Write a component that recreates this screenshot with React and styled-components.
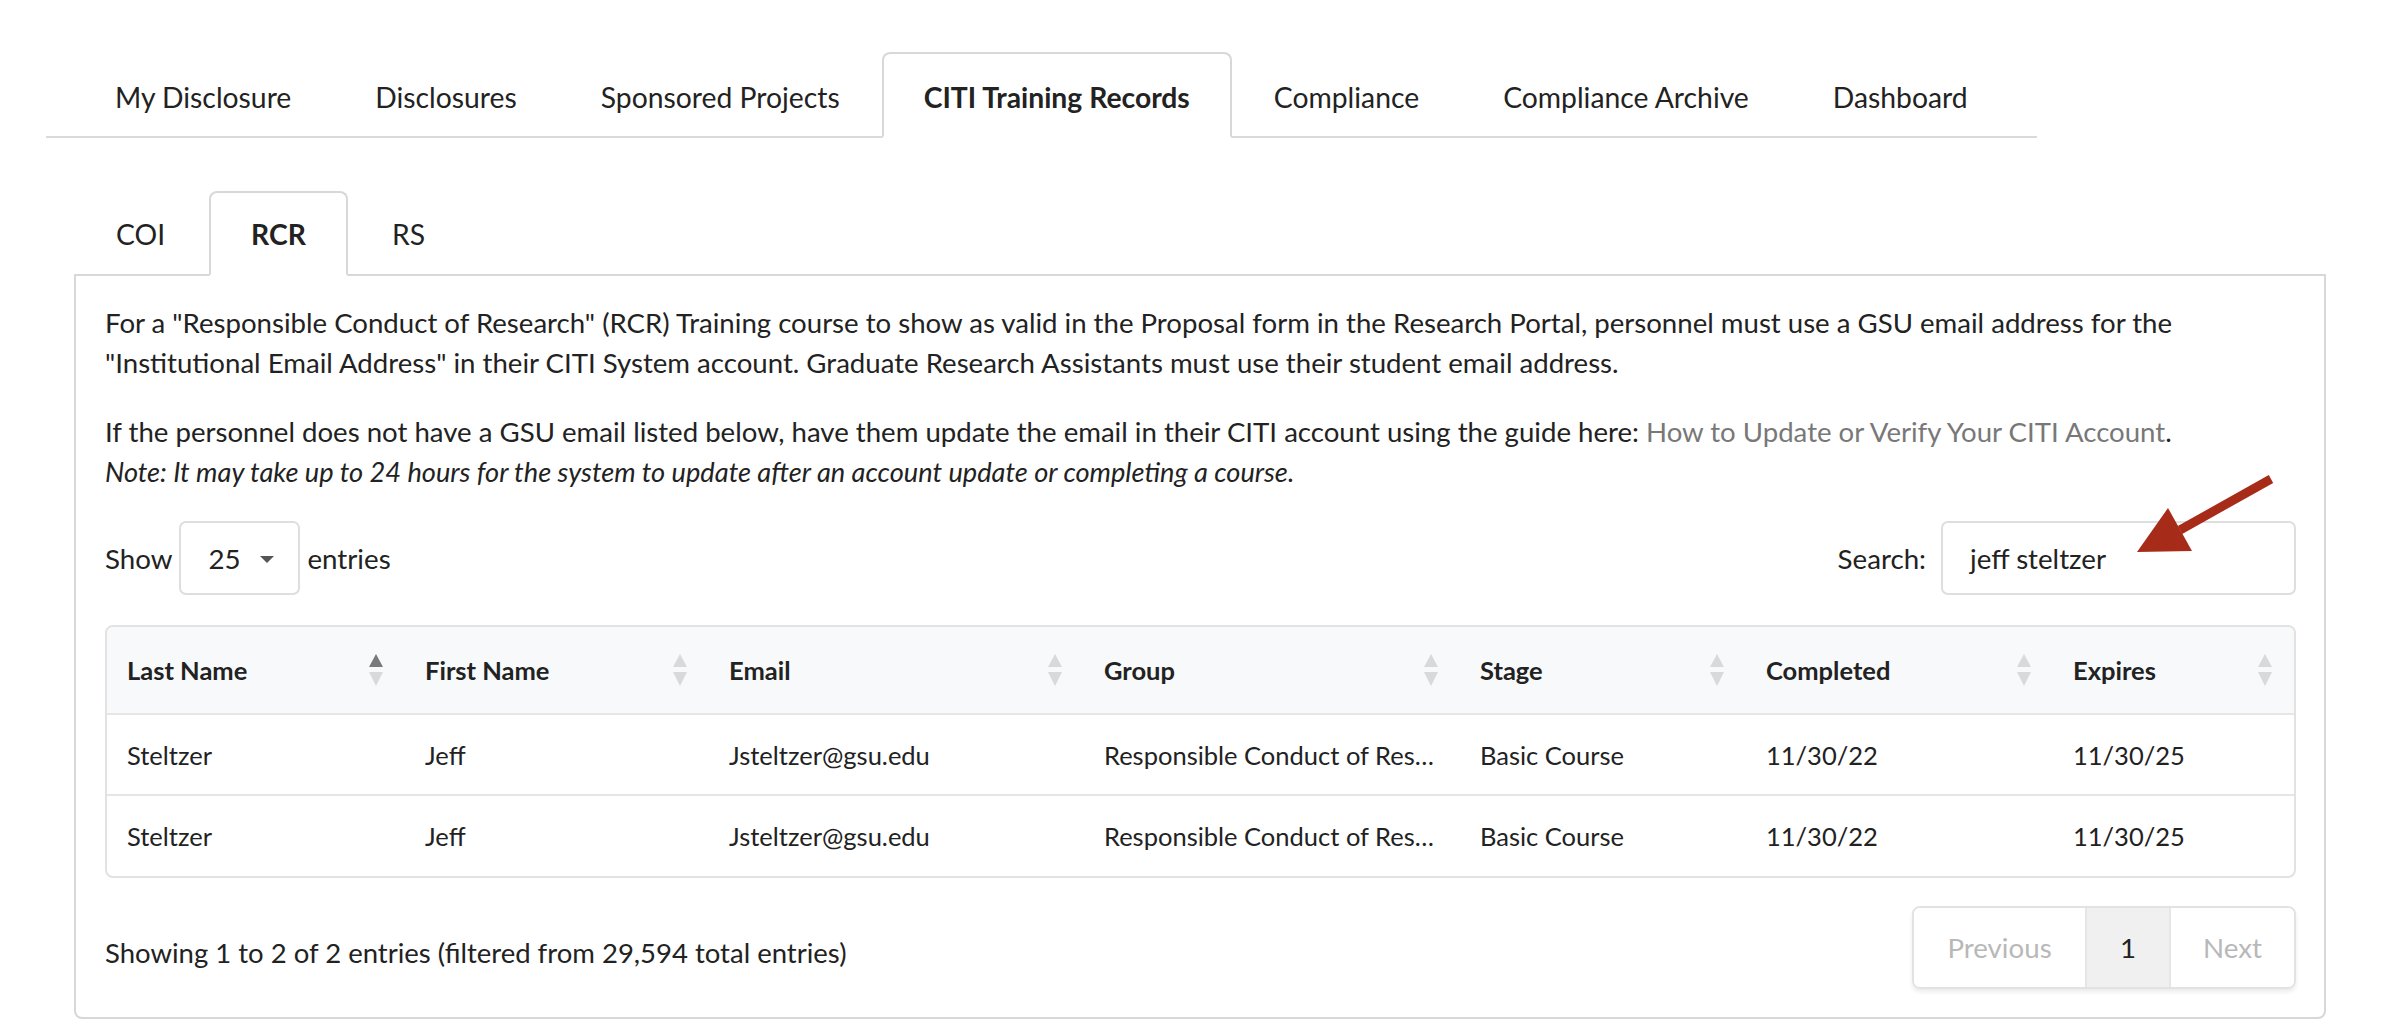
import React from 'react'
import styled, { createGlobalStyle } from 'styled-components'

const GlobalStyle = createGlobalStyle`
  html, body { margin: 0; padding: 0; background: #fff; }
  body { font-family: Lato, 'Open Sans', sans-serif; color: #222; }
  * { box-sizing: border-box; }
`

const Page = styled.div`
  position: relative;
  width: 2404px;
  height: 1036px;
  padding-top: 52px;
  overflow: hidden;
`

const MainNav = styled.nav`
  display: flex;
  margin-left: 46px;
  width: 1991px;
  padding-left: 27px;
  border-bottom: 2px solid #dadada;
`

const Tab = styled.a`
  display: block;
  margin-bottom: -2px;
  padding: ${p => (p.$small ? '21px 40px 20px' : '23px 40px 19px')};
  border: 2px solid ${p => (p.$active ? '#d8d8d8' : 'transparent')};
  border-bottom-color: ${p => (p.$active ? '#fff' : 'transparent')};
  border-radius: 8px 8px 0 0;
  background: ${p => (p.$active ? '#fff' : 'transparent')};
  font-size: 28.3px;
  line-height: 40px;
  font-weight: ${p => (p.$active ? 700 : 400)};
  color: #222;
  white-space: nowrap;
  position: relative;
  z-index: 1;
`

const Section = styled.section`
  margin: 53px 0 0 74px;
  width: 2252px;
`

const SubNav = styled.div`
  display: flex;
  gap: 2px;
`

const Panel = styled.div`
  border: 2px solid #d8d8d8;
  border-radius: 0 0 8px 8px;
  padding: 27px 28px 28px 29px;
`

const Text = styled.p`
  margin: 0 0 29px;
  font-size: 27.6px;
  line-height: 40px;
  color: #222;
`

const Note = styled.em`
  font-style: italic;
  font-size: 27.2px;
`

const Link = styled.a`
  color: #787878;
  text-decoration: none;
`

const Controls = styled.div`
  display: flex;
  align-items: center;
  justify-content: space-between;
  margin-bottom: 30px;
  font-size: 27.7px;
`

const Field = styled.label`
  display: flex;
  align-items: center;
  gap: ${p => p.$gap || 8}px;
`

const Select = styled.div`
  display: flex;
  align-items: center;
  gap: 19px;
  width: 121px;
  height: 74px;
  padding-left: 27px;
  border: 2px solid #dedede;
  border-radius: 7px;
`

const Caret = styled.span`
  width: 0;
  height: 0;
  border-left: 7px solid transparent;
  border-right: 7px solid transparent;
  border-top: 7px solid #555;
  margin-top: 2px;
`

const SearchInput = styled.div`
  display: flex;
  align-items: center;
  width: 355px;
  height: 74px;
  padding-left: 27px;
  border: 2px solid #dedede;
  border-radius: 7px;
`

const TableBox = styled.div`
  border: 2px solid #e2e2e2;
  border-radius: 8px;
  overflow: hidden;
`

const Table = styled.table`
  width: 100%;
  border-collapse: collapse;
  table-layout: fixed;
  font-size: 25.5px;
`

const Th = styled.th`
  height: 87px;
  padding: 0 22px 0 20px;
  background: #f8f9fa;
  text-align: left;
  font-weight: 700;
  color: #222;
`

const HeadInner = styled.div`
  display: flex;
  align-items: center;
  justify-content: space-between;
`

const Td = styled.td`
  height: 81px;
  padding: 0 20px;
  border-top: 2px solid #e6e6e6;
  white-space: nowrap;
  overflow: hidden;
  text-overflow: ellipsis;
  color: #222;
`

const Footer = styled.div`
  display: flex;
  justify-content: space-between;
  align-items: flex-start;
  margin-top: 28px;
`

const Info = styled.div`
  padding-top: 27px;
  font-size: 27.5px;
  line-height: 40px;
`

const Pager = styled.div`
  display: flex;
  height: 83px;
  border: 2px solid #e2e2e2;
  border-radius: 8px;
  overflow: hidden;
  box-shadow: 0 3px 4px rgba(0, 0, 0, 0.08);
`

const PageBtn = styled.span`
  display: flex;
  align-items: center;
  justify-content: center;
  width: ${p => p.$w}px;
  font-size: 27.7px;
  color: ${p => (p.$current ? '#222' : '#b8b8b8')};
  background: ${p => (p.$current ? '#f0f0f0' : '#fff')};
  & + & { border-left: 2px solid #e6e6e6; }
`

const Arrow = styled.svg`
  position: absolute;
  left: 2120px;
  top: 460px;
`

const SortIcon = ({ active }) => (
  <svg width='14' height='33' viewBox='0 0 14 33'>
    <polygon points='7,0 14,13 0,13' fill={active ? '#7a7a7a' : '#d9d9d9'} />
    <polygon points='0,18 14,18 7,32' fill='#d9d9d9' />
  </svg>
)

const mainTabs = ['My Disclosure', 'Disclosures', 'Sponsored Projects', 'CITI Training Records', 'Compliance', 'Compliance Archive', 'Dashboard']
const subTabs = ['COI', 'RCR', 'RS']

const columns = [
  { label: 'Last Name', width: 298 },
  { label: 'First Name', width: 304 },
  { label: 'Email', width: 375 },
  { label: 'Group', width: 376 },
  { label: 'Stage', width: 286 },
  { label: 'Completed', width: 307 },
  { label: 'Expires' }
]

const rows = [
  ['Steltzer', 'Jeff', 'Jsteltzer@gsu.edu', 'Responsible Conduct of Research', 'Basic Course', '11/30/22', '11/30/25'],
  ['Steltzer', 'Jeff', 'Jsteltzer@gsu.edu', 'Responsible Conduct of Research', 'Basic Course', '11/30/22', '11/30/25']
]

export default function App () {
  return (
    <Page>
      <GlobalStyle />
      <MainNav>
        {mainTabs.map(t => (
          <Tab key={t} $active={t === 'CITI Training Records'}>{t}</Tab>
        ))}
      </MainNav>

      <Section>
        <SubNav>
          {subTabs.map(t => (
            <Tab key={t} $small $active={t === 'RCR'}>{t}</Tab>
          ))}
        </SubNav>
        <Panel>
          <Text>
            For a "Responsible Conduct of Research" (RCR) Training course to show as valid in the Proposal form in the Research Portal, personnel must use a GSU email address for the "Institutional Email Address" in their CITI System account. Graduate Research Assistants must use their student email address.
          </Text>
          <Text>
            If the personnel does not have a GSU email listed below, have them update the email in their CITI account using the guide here: <Link>How to Update or Verify Your CITI Account</Link>.
            <br />
            <Note>Note: It may take up to 24 hours for the system to update after an account update or completing a course.</Note>
          </Text>

          <Controls>
            <Field $gap={7}>
              Show
              <Select>25 <Caret /></Select>
              entries
            </Field>
            <Field $gap={15}>
              Search:
              <SearchInput>jeff steltzer</SearchInput>
            </Field>
          </Controls>

          <TableBox>
            <Table>
              <colgroup>
                {columns.map(c => <col key={c.label} style={c.width ? { width: c.width } : undefined} />)}
              </colgroup>
              <thead>
                <tr>
                  {columns.map((c, i) => (
                    <Th key={c.label}>
                      <HeadInner>
                        {c.label}
                        <SortIcon active={i === 0} />
                      </HeadInner>
                    </Th>
                  ))}
                </tr>
              </thead>
              <tbody>
                {rows.map((r, i) => (
                  <tr key={i}>
                    {r.map((v, j) => <Td key={j}>{v}</Td>)}
                  </tr>
                ))}
              </tbody>
            </Table>
          </TableBox>

          <Footer>
            <Info>Showing 1 to 2 of 2 entries (filtered from 29,594 total entries)</Info>
            <Pager>
              <PageBtn $w={171}>Previous</PageBtn>
              <PageBtn $w={84} $current>1</PageBtn>
              <PageBtn $w={125}>Next</PageBtn>
            </Pager>
          </Footer>
        </Panel>
      </Section>

      <Arrow width='170' height='110' viewBox='0 0 170 110'>
        <line x1='151' y1='19' x2='60' y2='70' stroke='#a72b19' strokeWidth='9' />
        <polygon points='17,92 48,48 72,91' fill='#a72b19' />
      </Arrow>
    </Page>
  )
}
